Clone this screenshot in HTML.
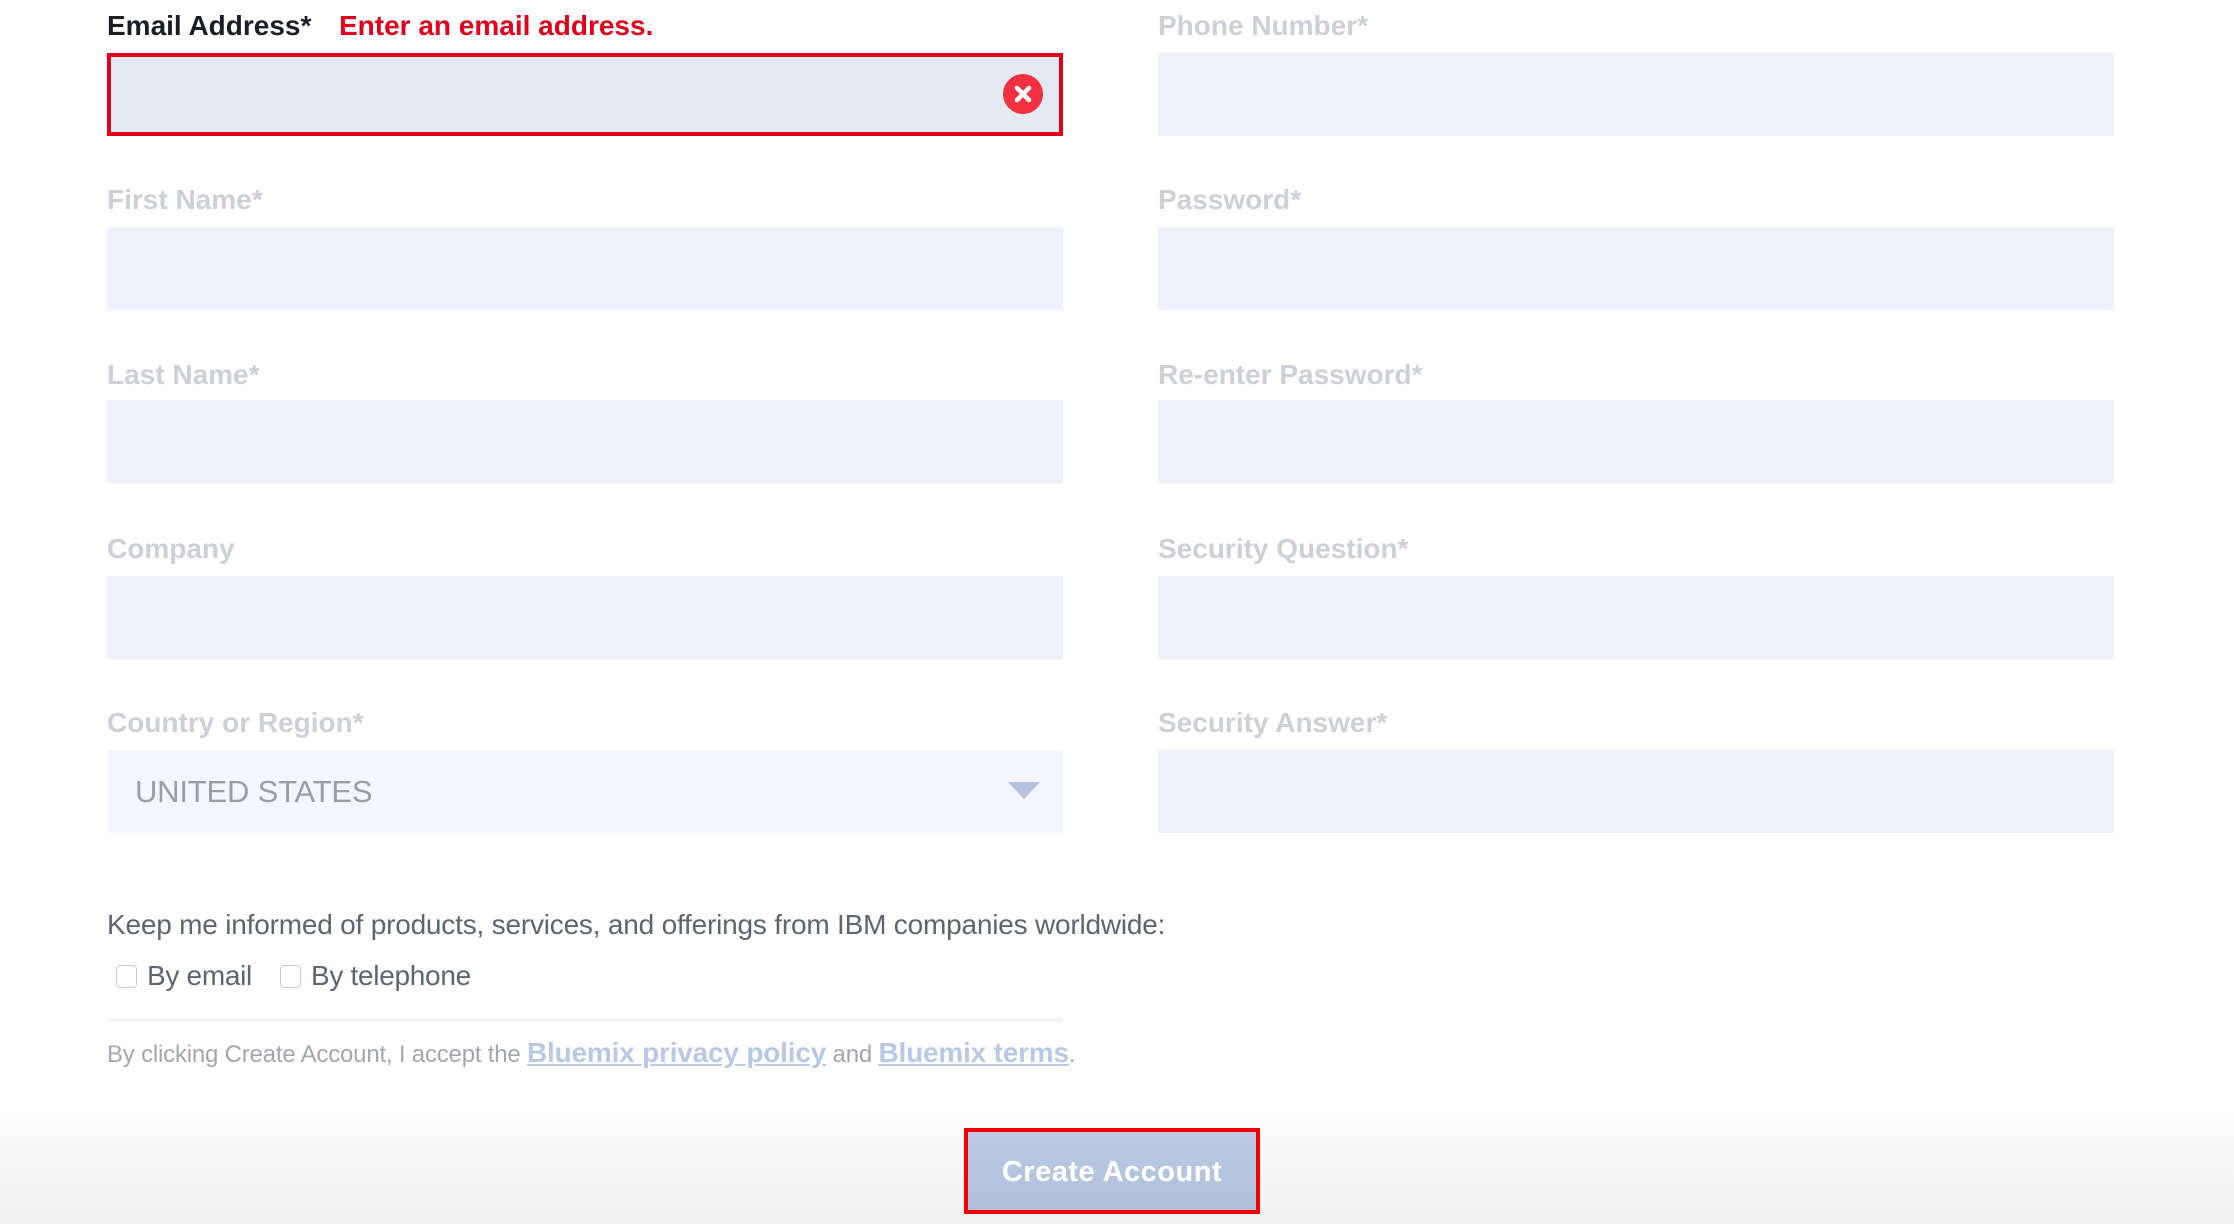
<!DOCTYPE html>
<html><head><meta charset="utf-8"><style>
body{margin:0;width:2234px;height:1224px;position:relative;overflow:hidden;font-family:"Liberation Sans",Arial,sans-serif;background:linear-gradient(#fff 0,#fff 1100px,#efefef 1224px);}
.l{position:absolute;font-size:28px;font-weight:bold;color:#cdd0d4;line-height:34px;letter-spacing:0;white-space:nowrap}
.f{position:absolute;height:83px;background:#eef1f9}
.c1{left:107px;width:956px}.c2{left:1158px;width:956px}
.t{position:absolute;white-space:nowrap}
.cb{position:absolute;width:19px;height:21px;border:1.5px solid #c9ccd0;border-radius:4px;background:#fff}
</style></head><body>
<div class="l" style="left:107px;top:9px;color:#1a1f26">Email Address*</div>
<div class="l" style="left:339px;top:9px;color:#e0001b">Enter an email address.</div>
<div class="f c1" style="top:53px;background:#e4eaf4;box-sizing:border-box;border:4px solid #e0001b"></div>
<div style="position:absolute;left:1003px;top:74px;width:40px;height:40px;border-radius:50%;background:#f2303f"></div>
<svg style="position:absolute;left:1003px;top:74px" width="40" height="40"><path d="M14 14L26 26M26 14L14 26" stroke="#fff" stroke-width="4.5" stroke-linecap="round"/></svg>

<div class="l" style="left:1158px;top:9px">Phone Number*</div>
<div class="f c2" style="top:53px"></div>
<div class="l" style="left:107px;top:183px">First Name*</div>
<div class="f c1" style="top:227px"></div>
<div class="l" style="left:1158px;top:183px">Password*</div>
<div class="f c2" style="top:227px"></div>
<div class="l" style="left:107px;top:358px">Last Name*</div>
<div class="f c1" style="top:400px"></div>
<div class="l" style="left:1158px;top:358px">Re-enter Password*</div>
<div class="f c2" style="top:400px"></div>
<div class="l" style="left:107px;top:532px">Company</div>
<div class="f c1" style="top:576px"></div>
<div class="l" style="left:1158px;top:532px">Security Question*</div>
<div class="f c2" style="top:576px"></div>
<div class="l" style="left:107px;top:706px">Country or Region*</div>
<div class="f c1" style="top:750px;background:#f4f6fb"></div>
<div class="t" style="left:135px;top:774px;font-size:31px;color:#999ea4;letter-spacing:-0.2px">UNITED STATES</div>
<svg style="position:absolute;left:1008px;top:782px" width="32" height="18"><path d="M0 0H32L16 17Z" fill="#b2c2de"/></svg>
<div class="l" style="left:1158px;top:706px">Security Answer*</div>
<div class="f c2" style="top:750px"></div>

<div class="t" style="left:107px;top:909px;font-size:28px;color:#5d666f;letter-spacing:-0.2px">Keep me informed of products, services, and offerings from IBM companies worldwide:</div>
<div class="cb" style="left:116px;top:965px"></div>
<div class="t" style="left:147px;top:960px;font-size:28px;color:#5d666f;letter-spacing:-0.3px">By email</div>
<div class="cb" style="left:280px;top:965px"></div>
<div class="t" style="left:311px;top:960px;font-size:28px;color:#5d666f;letter-spacing:-0.3px">By telephone</div>
<div style="position:absolute;left:107px;top:1018px;width:956px;height:4px;background:#f2f4f7"></div>
<div class="t" style="left:107px;top:1037px;font-size:24px;color:#a3a7ab;letter-spacing:-0.2px">By clicking Create Account, I accept the <span style="color:#b8c9e6;font-weight:bold;font-size:28px;text-decoration:underline">Bluemix privacy policy</span> and <span style="color:#b8c9e6;font-weight:bold;font-size:28px;text-decoration:underline">Bluemix terms</span>.</div>

<div style="position:absolute;left:964px;top:1128px;width:296px;height:86px;box-sizing:border-box;border:4px solid #f00000;background:linear-gradient(#bccbe3,#afc0db)"></div>
<div class="t" style="left:964px;width:296px;top:1156px;text-align:center;font-size:29px;font-weight:bold;color:#fff;letter-spacing:0.5px">Create Account</div>
</body></html>
